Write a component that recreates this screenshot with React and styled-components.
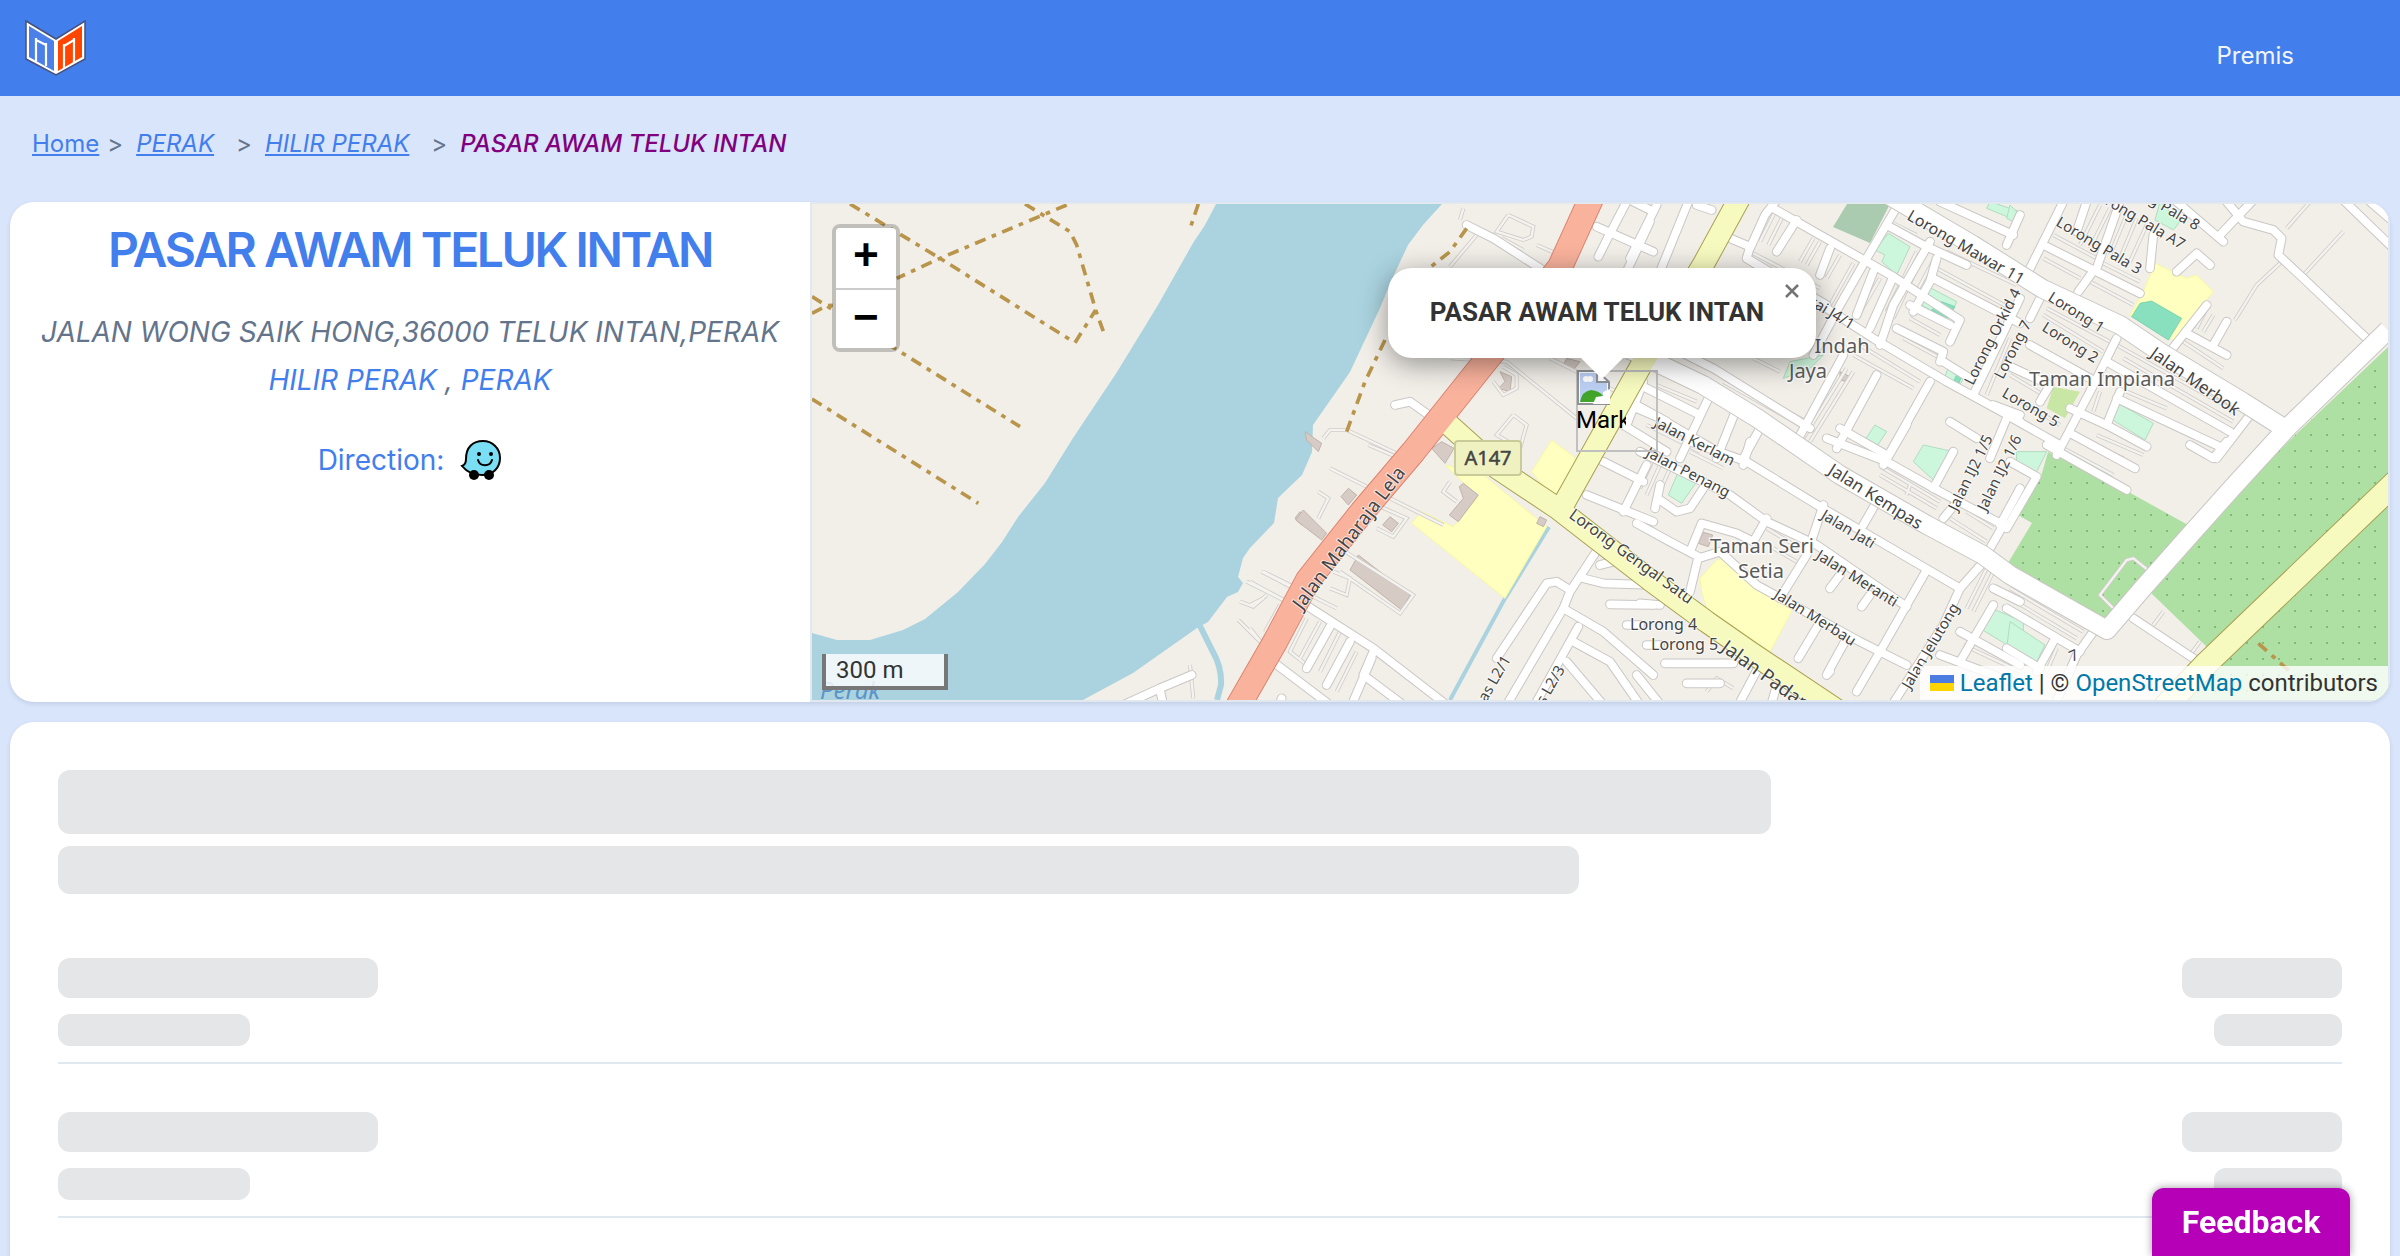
import styled, { createGlobalStyle } from "styled-components";

const GlobalStyle = createGlobalStyle`
  * {
    box-sizing: border-box;
  }
  body {
    margin: 0;
    background: #d9e5fb;
    font-family: Inter, sans-serif;
    font-size: 24px;
    line-height: 32px;
    color: #64748b;
  }
  a {
    color: #427eec;
  }
`;

const Page = styled.div`
  display: flex;
  flex-direction: column;
  height: 100vh;
  overflow: hidden;
`;

const Header = styled.header`
  display: flex;
  flex: none;
  align-items: center;
  justify-content: space-between;
  height: 96px;
  padding: 0 106px 0 24px;
  background: #427eec;
`;

const HomeLink = styled.a`
  display: flex;
`;

const NavLink = styled.a`
  padding-top: 16px;
  color: #f1f5f9;
  text-decoration: none;
`;

const Breadcrumb = styled.nav`
  display: flex;
  flex: none;
  gap: 8px;
  height: 106px;
  padding: 32px;
  line-height: 32px;
`;

const Crumb = styled.a`
  font-style: ${(p) => (p.$italic ? "italic" : "normal")};
  margin-left: ${(p) => (p.$italic ? "5px" : "0")};
  margin-right: ${(p) => (p.$italic ? "14px" : "0")};
`;

const Current = styled.span`
  margin-left: 5px;
  color: #800080;
  font-style: italic;
  font-weight: 500;
`;

const Main = styled.main`
  display: flex;
  flex: 1;
  flex-direction: column;
  gap: 20px;
  min-height: 0;
  padding: 0 10px;
`;

const Premise = styled.section`
  display: grid;
  flex: none;
  grid-template-columns: minmax(0, 40fr) minmax(0, 79fr);
  height: 500px;
  border-radius: 24px;
  overflow: hidden;
  background: #fff;
  box-shadow: 0 2px 4px rgba(100, 116, 139, 0.2);
`;

const Info = styled.div`
  display: flex;
  flex-direction: column;
  align-items: center;
  padding-top: 20px;
  font-size: 28px;
  text-align: center;
`;

const Title = styled.h1`
  margin: 0 0 30px;
  color: #427eec;
  font-size: 48px;
  font-weight: 600;
  line-height: 56px;
  letter-spacing: -0.05em;
`;

const Address = styled.address`
  line-height: 48px;

  a {
    text-decoration: none;
  }
`;

const Direction = styled.a`
  display: flex;
  align-items: center;
  gap: 16px;
  margin-top: 32px;
  line-height: 48px;
  text-decoration: none;
`;

const MapFrame = styled.div`
  position: relative;
  border: 2px solid #e2e8f0;
  overflow: hidden;
  background: #f2efe9;
  color: #333;
  font-family: Roboto, sans-serif;
`;

const MapSvg = styled.svg`
  display: block;
  width: 100%;
  height: 100%;
  font-family: "Noto Sans", sans-serif;
`;

const ZoomBox = styled.div`
  position: absolute;
  top: 20px;
  left: 20px;
  border: 4px solid rgba(0, 0, 0, 0.2);
  border-radius: 8px;
  background-clip: padding-box;
  overflow: hidden;
`;

const ZoomButton = styled.button`
  display: block;
  width: 60px;
  height: 60px;
  padding: 0;
  border: 0;
  background: #fff;
  color: #000;
  font: bold 44px/60px "Liberation Mono", monospace;

  & + & {
    border-top: 2px solid #ccc;
  }
`;

const ScaleLine = styled.div`
  position: absolute;
  bottom: 10px;
  left: 10px;
  width: 126px;
  height: 36px;
  padding-left: 10px;
  border: 4px solid #777;
  border-top: 0;
  background: rgba(255, 255, 255, 0.8);
`;

const Attribution = styled.div`
  position: absolute;
  right: 0;
  bottom: 0;
  display: flex;
  align-items: center;
  gap: 6px;
  height: 34px;
  padding: 0 10px;
  background: rgba(255, 255, 255, 0.8);

  a {
    color: #0078a8;
    text-decoration: none;
  }
`;

const Popup = styled.div`
  position: absolute;
  top: 64px;
  left: 50%;
  width: 428px;
  height: 90px;
  margin-left: -212px;
  padding-right: 10px;
  border-radius: 24px;
  background: #fff;
  box-shadow: 0 6px 28px rgba(0, 0, 0, 0.4);
  font-size: 26px;
  font-weight: bold;
  line-height: 88px;
  text-align: center;

  &::after {
    content: "";
    position: absolute;
    top: 100%;
    left: 50%;
    margin-left: -21px;
    border: 21px solid transparent;
    border-top-color: #fff;
    border-bottom: 0;
  }
`;

const CloseButton = styled.button`
  position: absolute;
  top: 0;
  right: 0;
  width: 48px;
  height: 48px;
  padding: 0;
  border: 0;
  background: none;
  color: #757575;
`;

const Marker = styled.div`
  position: absolute;
  top: 166px;
  left: 50%;
  width: 82px;
  height: 82px;
  margin-left: -24px;
  box-shadow: inset 0 0 0 2px silver;
  color: #000;

  svg {
    display: block;
  }
`;

const MarkerAlt = styled.div`
  width: 50px;
  overflow: hidden;
  line-height: 30px;
`;

const Prices = styled.section`
  flex: 1;
  min-height: 0;
  padding: 48px 48px 0;
  border-radius: 24px 24px 0 0;
  background: #fff;
  box-shadow: 0 2px 4px rgba(100, 116, 139, 0.2);
`;

const Bone = styled.div`
  width: ${(p) => p.$width};
  height: ${(p) => p.$height}px;
  border-radius: 12px;
  background: #e5e6e8;
`;

const Heading = styled.div`
  display: grid;
  gap: 12px;
  margin-bottom: 16px;
`;

const Row = styled.div`
  display: flex;
  justify-content: space-between;
  padding: 48px 0 16px;
  border-bottom: 2px solid #e2e8f0;
`;

const Pair = styled.div`
  display: flex;
  flex-direction: column;
  align-items: ${(p) => (p.$end ? "flex-end" : "flex-start")};
  gap: 16px;
`;

const Feedback = styled.button`
  position: fixed;
  right: 50px;
  bottom: 0;
  width: 198px;
  height: 68px;
  border: 0;
  border-radius: 12px 12px 0 0;
  background: #b500b8;
  box-shadow: 0 0 8px rgba(0, 0, 0, 0.4);
  color: #fff;
  font: bold 32px/40px Roboto, sans-serif;
`;

// Map data, one entry per tile. Tile units are a third of a pixel.
const tiles = [
  {
    x: 800,
    y: 195,
    roads: ["970 1530 1080 1480 1175 1440", "1080 1485 1090 1530"],
    lanes: [
      "1385 1130 1500 1190",
      "1340 1160 1460 1220",
      "1320 1220 1360 1235 1400 1200",
      "1315 1275 1390 1350",
      "1440 1230 1400 1310",
      "1170 1410 1180 1510",
    ],
    buildings: ["1485 970 1500 950 1520 970 1505 990"],
    paths: [
      "150 27 420 190 815 437",
      "800 30 420 190 290 250",
      "36 355 80 332 108 330",
      "675 27 810 110 830 150 887 345 912 415",
      "825 443 887 345",
      "36 305 300 470 660 695",
      "36 612 535 925",
      "1195 27 1172 95",
    ],
  },
  {
    x: 1250,
    y: 195,
    roads: [
      "650 90 730 130 870 220",
      "1130 20 1075 125 1045 185",
      "1040 95 1210 170",
      "1200 80 1130 230",
      "435 630 480 620 550 670",
      "1150 625 1250 680",
      "1120 690 1250 770",
      "1180 560 1130 690",
    ],
    lanes: [
      "600 215 680 120",
      "775 60 850 95 845 125 820 135 740 110 775 60",
      "755 130 820 165",
      "860 150 940 185",
      "600 490 770 500 980 670",
      "730 560 760 600 800 580 800 540 760 515",
      "790 660 830 690 810 760 740 720 790 660",
      "220 730 240 705 290 705 450 780",
      "640 40 630 75",
      "900 490 1100 590",
    ],
    buildings: [
      "750 530 785 545 780 590 745 580 765 560",
      "165 710 215 745 205 770 170 735",
      "950 490 990 500 970 525 940 510",
    ],
    paths: ["650 100 600 170 530 225", "405 435 345 560 290 710"],
  },
  {
    x: 1250,
    y: 445,
    roads: [
      "175 485 370 610 590 780",
      "240 545 170 670",
      "300 590 230 720",
      "365 640 305 780",
      "75 655 240 780",
      "95 760 80 800",
      "370 620 340 690 460 780",
      "740 640 890 415 920 410 960 435",
      "1035 325 960 440 940 490 770 780",
      "940 490 1060 560 1210 690",
      "985 545 860 770",
      "1000 400 1060 415 1210 420",
      "1080 478 1210 480",
      "970 590 1080 650 1170 780",
      "950 650 1060 780",
      "1050 360 1110 345 1210 400",
      "1060 50 1180 110",
      "1190 60 1120 200",
      "1010 150 1210 230",
      "1130 540 1170 540",
    ],
    lanes: [
      "240 70 580 240",
      "205 140 235 160 205 220",
      "40 380 260 490",
      "0 410 110 470",
      "40 460 0 480",
      "90 480 45 560",
      "0 550 40 600",
      "380 180 470 220 430 275 380 250",
      "170 520 120 620 170 660",
      "210 530 150 640",
      "250 380 300 400 290 450 240 430",
      "270 310 490 450 450 505 270 380",
      "600 110 580 140 620 170",
      "355 0 450 40",
      "270 560 210 680",
      "320 620 260 740",
    ],
    buildings: [
      "325 330 480 450 455 495 300 375",
      "160 195 230 265 215 285 137 225",
      "295 130 320 150 295 180 273 155",
      "640 115 685 150 625 230 598 210 640 160 628 125",
      "420 215 445 235 425 260 398 240",
      "870 215 890 225 880 245 860 235",
      "545 10 575 -10 612 10 585 55",
    ],
    sand: [
      "485 235 515 200 610 245 685 155 585 60 700 90 890 245 765 460",
      "845 80 910 160 985 45 905 -15",
    ],
  },
  {
    x: 1640,
    y: 195,
    roads: [
      "145 20 60 230",
      "-20 20 40 50",
      "50 30 -30 190",
      "170 30 215 45",
      "410 15 375 60 330 160",
      "270 130 330 155 320 190 560 330",
      "400 40 540 120 760 245 960 375 930 440",
      "470 75 410 170",
      "780 20 680 190 600 330 520 480",
      "760 245 690 400",
      "740 90 850 150 980 210",
      "870 140 760 330 720 450",
      "880 250 1140 385",
      "890 190 870 260 820 350",
      "810 330 930 390",
      "770 400 910 470 900 500",
      "910 500 990 550",
      "1140 310 1000 600",
      "320 190 560 340 700 430 920 560 1140 680",
      "870 560 740 790",
      "610 480 470 740",
      "710 540 590 760",
      "600 700 740 780",
      "0 570 180 660",
      "210 600 120 790",
      "290 640 230 790",
      "360 700 310 790",
      "-10 640 60 670 250 780",
      "120 470 220 520 510 700",
      "930 680 1010 730",
      "1100 670 1050 790",
      "1060 630 1140 660",
      "900 20 1120 120",
      "1140 60 1100 150",
      "570 160 540 240",
      "700 230 650 360",
    ],
    lanes: [
      "405 50 360 140",
      "430 60 385 150",
      "540 140 500 210",
      "520 130 480 200",
      "600 180 560 250",
      "660 210 590 340",
      "640 205 570 330",
      "720 250 650 370",
      "850 180 760 370",
      "830 170 740 350",
      "900 160 830 290",
      "330 170 540 280",
      "340 200 450 260",
      "750 80 830 120",
      "920 170 1130 270",
      "890 220 1110 340",
      "810 370 900 420",
      "790 430 920 500",
      "660 450 840 560",
      "640 480 820 580",
      "240 540 500 680",
      "250 560 480 690",
      "640 530 510 740",
      "620 520 490 730",
      "50 570 170 620",
      "20 690 180 770",
      "340 490 420 530",
      "1080 420 1000 600",
      "1110 430 1040 600",
      "370 700 520 790",
    ],
    buildings: ["600 530 630 545 620 560 600 555"],
    parks: [
      "745 115 810 155 770 240 725 200 735 180 705 165",
      "865 275 950 320 925 375 835 325",
      "930 500 980 530 960 570 915 545",
      "705 690 740 710 710 755 675 735",
      "450 500 550 480 510 520 430 550",
      "1050 20 1140 50 1125 75 1040 40",
    ],
    pitches: ["905 320 945 335 920 370 875 345", "950 540 965 545 955 568 940 560"],
  },
  {
    x: 1640,
    y: 445,
    roads: [
      "330 -10 310 60",
      "150 -10 320 50 540 185 720 290 960 430",
      "0 20 270 150 380 230 530 300 800 485",
      "-10 235 90 290 175 335 150 440",
      "60 120 45 190",
      "60 165 110 200 150 190 190 130",
      "150 320 185 235 290 265 340 290 380 220",
      "175 340 240 320 350 420 660 590 800 660",
      "550 180 500 330 420 460",
      "860 375 720 620 650 740",
      "600 390 570 430",
      "690 450 665 485",
      "535 540 475 640",
      "620 580 565 680 560 690 570 680",
      "710 170 670 240",
      "1040 340 960 430 910 540 750 790",
      "800 -60 730 60",
      "560 -20 740 50 900 140 1090 240 1050 310",
      "940 20 880 130",
      "1140 130 1080 240",
      "960 160 910 220",
      "1060 430 1140 470",
      "960 560 1140 660",
      "1060 480 960 650",
      "900 630 1140 720",
      "0 475 60 480",
      "75 655 280 655",
      "140 715 240 715",
      "-10 690 70 790",
      "370 640 290 790",
      "420 690 390 790",
      "20 600 60 600",
    ],
    lanes: [
      "40 40 0 130",
      "60 60 20 150",
      "90 70 50 160",
      "730 70 900 170",
      "720 90 890 190",
      "810 120 800 150",
      "380 250 480 310",
      "400 310 470 350",
      "1040 370 980 490",
      "1060 380 1000 500",
      "1080 440 1140 470",
      "970 600 1140 680",
      "150 20 250 70",
      "980 200 1060 250",
      "930 220 1040 290",
      "200 740 230 700 280 730",
    ],
    buildings: ["190 262 218 270 205 305 175 295"],
    parks: [
      "850 0 940 20 885 110 820 50",
      "115 80 170 110 125 175 85 150",
      "1055 490 1150 530 1150 630 1020 550",
    ],
    sand: ["185 440 180 400 230 345 275 335 310 395 465 480 390 620 200 490"],
  },
  {
    x: 2010,
    y: 195,
    roads: [
      "160 20 50 240",
      "110 155 390 295",
      "245 235 205 290",
      "330 20 260 220",
      "230 20 200 110",
      "430 120 420 220",
      "500 20 640 140",
      "730 15 630 120",
      "590 330 480 470",
      "500 230 560 175 600 210",
      "650 380 610 450",
      "530 415 650 480",
      "90 310 60 370",
      "320 430 240 590 140 780",
      "60 450 240 550",
      "290 500 660 710",
      "720 660 620 790",
      "180 640 290 690 410 755",
      "330 590 290 690",
      "320 610 640 760",
      "-10 510 120 570 90 620",
      "-10 660 150 750",
      "650 20 700 80 790 105 815 130 805 180 880 250 1085 445",
      "1000 15 1150 160",
      "1080 20 1150 80",
    ],
    lanes: [
      "1000 110 880 240",
      "810 205 740 270 675 375",
      "900 20 830 100",
      "130 120 260 190",
      "100 190 210 250",
      "270 200 390 260",
      "240 260 370 330",
      "270 30 210 150",
      "300 40 240 160",
      "350 60 300 180",
      "380 70 330 190",
      "410 90 360 200",
      "320 450 660 640",
      "340 490 670 680",
      "350 590 470 640",
      "240 580 220 640",
      "270 590 250 650",
      "210 650 400 750",
      "180 720 340 790",
      "110 340 300 440",
      "100 360 280 470",
      "40 300 0 380",
      "0 540 100 600",
      "20 610 150 690",
      "590 340 560 400",
      "520 440 640 520",
      "610 360 580 410",
    ],
    sand: ["435 205 530 250 560 240 610 290 490 435 360 360 400 290"],
    parks: [
      "325 625 430 685 405 735 300 670",
      "450 20 510 80 490 105 435 75",
      "0 30 20 50 10 80 -10 70",
    ],
    grass: ["130 575 210 590 165 670 110 640"],
    pitches: ["365 365 390 325 425 318 515 370 475 435"],
  },
  {
    x: 2010,
    y: 445,
    roads: [
      "110 0 350 135",
      "190 -30 375 70",
      "540 0 610 40 650 -10",
      "0 50 80 95 -10 250",
      "370 520 580 660",
      "250 560 200 630 130 790",
      "-10 490 210 620",
      "130 590 80 680",
      "-10 610 90 670",
    ],
    lanes: [
      "320 500 270 450 350 345 370 340 420 380",
      "460 500 430 540",
      "570 590 540 630",
      "0 430 220 560",
      "0 460 200 580",
      "160 10 310 90",
      "260 -30 400 30",
      "140 610 110 680",
    ],
    parks: ["0 530 105 600 80 650 -10 610", "20 20 110 20 80 80 20 60"],
    paths: ["745 595 840 680"],
  },
];

const labels = [
  ["Jalan Maharaja Lela", 1302, 611, -53, 19],
  ["Lorong Mawar 11", 1906, 219, 30, 16],
  ["Lorong Orkid 4", 1973, 386, -63, 15],
  ["Lorong 7", 2003, 380, -63, 15],
  ["Lorong 1", 2047, 300, 32, 15],
  ["Lorong 2", 2041, 330, 32, 15],
  ["Lorong 5", 2001, 396, 30, 15],
  ["Lorong Pala 3", 2055, 225, 31, 15],
  ["Lorong Pala A7", 2090, 195, 31, 15],
  ["Lorong Pala 8", 2113, 181, 31, 15],
  ["Jalan Merbok", 2149, 356, 35, 17],
  ["Sungkai J4/1", 1776, 285, 31, 15],
  ["Jalan Kerlam", 1653, 426, 27, 15],
  ["Jalan Penang", 1645, 456, 27, 15],
  ["Jalan Kempas", 1827, 473, 32, 17],
  ["Jalan Jati", 1820, 518, 31, 15],
  ["Jalan Meranti", 1815, 558, 32, 15],
  ["Jalan Merbau", 1773, 597, 32, 15],
  ["Lorong Gengal Satu", 1568, 517, 36, 16],
  ["Jalan Padang", 1720, 650, 36, 19],
  ["Lorong 4", 1630, 630, 0, 16],
  ["Lorong 5", 1651, 650, 0, 16],
  ["Jalan Jelutong", 1910, 690, -59, 15],
  ["Jalan IJ2 1/5", 1957, 512, -64, 15],
  ["Jalan IJ2 1/6", 1986, 512, -64, 15],
  ["Emas L2/1", 1475, 722, -60, 15],
  ["Emas L2/3", 1529, 732, -60, 15],
  ["7", 2072, 662, -25, 15],
];

const places = [
  ["Taman Impiana", 2102, 386],
  ["Indah", 1842, 353],
  ["Jaya", 1808, 378],
  ["Taman Seri", 1762, 553],
  ["Setia", 1761, 578],
];

const mainRoads = [
  {
    color: "#fff",
    edge: "#c9c7c4",
    width: 18,
    points: "1630 350 1703 385 1757 418 1840 475 1927 525 1983 555 2010 575 2107 630 2143 588 2190 535 2233 487 2287 428 2388 330",
  },
  {
    color: "#fff",
    edge: "#c9c7c4",
    width: 18,
    points: "1880 190 1973 245 2043 289 2120 325 2160 352 2243 402 2287 430",
  },
  {
    color: "#f7fabf",
    edge: "#a9a152",
    width: 21,
    points: "1447 423 1497 468 1557 508 1593 536 1650 580 1707 622 1750 652 1840 712",
  },
  {
    color: "#f7fabf",
    edge: "#a9a152",
    width: 21,
    points: "1744 190 1703 265 1643 362 1562 507",
  },
  {
    color: "#f7fabf",
    edge: "#a9a152",
    width: 23,
    points: "2400 478 2207 663 2160 712",
  },
  {
    color: "#f9b29c",
    edge: "#dc8371",
    width: 24,
    points: "1595 190 1560 267 1488 358 1413 452 1362 512 1308 580 1275 642 1236 710",
  },
];

const Layer = ({ kind, shape: Shape = "polygon", ...rest }) =>
  tiles.map((tile) => (
    <g
      key={`${tile.x}-${tile.y}`}
      transform={`translate(${tile.x} ${tile.y}) scale(0.33333)`}
      {...rest}
    >
      {(tile[kind] || []).map((points) => (
        <Shape key={points} points={points} />
      ))}
    </g>
  ));

const StreetMap = () => (
  <MapSvg
    viewBox="812 204 1576 496"
    preserveAspectRatio="xMidYMid slice"
    role="img"
    aria-label="Map of Teluk Intan"
  >
    <defs>
      <pattern id="orchard" width="16" height="16" patternUnits="userSpaceOnUse" x="2047" y="459">
        <circle cx="8" cy="8" r="1" fill="#6fae6a" />
      </pattern>
    </defs>
    <path
      fill="#aad3df"
      d="M1216 204L1205 225L1193 243L1158 305L1117 372L1073 438L1045 483L1018 517L1002 542L985 564L958 592L925 619L903 630L870 640H837L812 633V700H1083L1133 673L1197 628L1208 622L1227 597L1238 592L1243 583L1238 577L1243 558L1250 548L1274 523L1278 498L1302 475L1312 452L1313 425L1350 372L1380 308L1393 277L1408 245L1423 225L1442 204Z"
    />
    <g fill="none" stroke="#aad3df">
      <path strokeWidth="6" d="M1200 626L1213 652Q1222 668 1221 685L1217 700" />
      <path strokeWidth="4" d="M1549 527L1503 602L1450 700" />
    </g>
    <polygon fill="#aacbaf" points="1847 204 1833 227 1870 243 1890 204" />
    {["#aedfa3", "url(#orchard)"].map((fill) => (
      <g key={fill} fill={fill}>
        <polygon points="2048 452 2125 490 2188 525 2110 625 2005 568 2032 523 2018 515 2040 480" />
        <polygon points="2388 347 2290 440 2240 490 2150 592 2208 648 2160 700 2388 700" />
      </g>
    ))}
    <Layer kind="sand" fill="#ffffc0" stroke="#f7f7a0" strokeWidth="3" />
    <Layer kind="parks" fill="#cdf7dc" stroke="#afdcc0" strokeWidth="3" />
    <Layer kind="grass" fill="#c8e6a4" />
    <Layer kind="pitches" fill="#88e0be" stroke="#62c9a2" strokeWidth="2" />
    <Layer kind="buildings" fill="#d6cbc5" stroke="#c0b3ab" strokeWidth="3" />
    <Layer kind="lanes" shape="polyline" fill="none" stroke="#cfccc9" strokeWidth="12" />
    <Layer kind="lanes" shape="polyline" fill="none" stroke="#f5f3ef" strokeWidth="7" />
    <Layer
      kind="roads"
      shape="polyline"
      fill="none"
      stroke="#cac7c5"
      strokeWidth="29"
      strokeLinecap="round"
      strokeLinejoin="round"
    />
    <Layer
      kind="roads"
      shape="polyline"
      fill="none"
      stroke="#fff"
      strokeWidth="23"
      strokeLinecap="round"
      strokeLinejoin="round"
    />
    <g fill="none" strokeLinejoin="round">
      {mainRoads.map((r) => (
        <polyline key={r.points} points={r.points} stroke={r.edge} strokeWidth={r.width + 2} />
      ))}
      {mainRoads.map((r) => (
        <polyline key={r.points} points={r.points} stroke={r.color} strokeWidth={r.width} />
      ))}
    </g>
    <Layer
      kind="paths"
      shape="polyline"
      fill="none"
      stroke="#b9954c"
      strokeWidth="11"
      strokeDasharray="34 20 14 20"
    />
    <rect x="1455" y="441" width="66" height="34" rx="3" fill="#eff2c0" stroke="#c9cb98" strokeWidth="2" />
    <text x="1488" y="465" fontSize="20" fill="#444" stroke="#444" strokeWidth="0.5" textAnchor="middle">
      A147
    </text>
    <g fill="#444" stroke="#fff" strokeOpacity="0.7" strokeWidth="2" paintOrder="stroke">
      {labels.map(([text, x, y, angle, size]) => (
        <text key={text + x} transform={`translate(${x} ${y}) rotate(${angle})`} fontSize={size}>
          {text}
        </text>
      ))}
    </g>
    <g fill="#5a5a5a" stroke="#fff" strokeOpacity="0.7" strokeWidth="3" paintOrder="stroke" textAnchor="middle">
      {places.map(([text, x, y]) => (
        <text key={text} x={x} y={y} fontSize="20">
          {text}
        </text>
      ))}
    </g>
    <text x="820" y="699" fontSize="24" fontStyle="italic" fill="#5b93c9">
      Perak
    </text>
  </MapSvg>
);

const Logo = () => (
  <svg width="64" height="64" viewBox="0 0 64 64" role="img" aria-label="Home">
    <path d="M2 5L32 23L61 5V43L32 59L2 43Z" fill="#fff" stroke="#46527c" strokeWidth="1.5" />
    <path d="M5 10L30 25V55L5 41Z" fill="#4a80e8" />
    <path d="M58 10L34 25V55L58 41Z" fill="#ff4500" />
    <path
      fill="none"
      stroke="#fff"
      strokeWidth="2.2"
      d="M12 45V22M12 24L22 29M22 27V50M40 53V28M50 47V22M40 30L50 24"
    />
  </svg>
);

const Waze = () => (
  <svg width="42" height="42" viewBox="0 0 42 42" aria-hidden="true">
    <path
      d="M23 2C32 2 40 9 40 19C40 29 33 36 22 36C12 36 6 32 2 27C5 26 6 24 6 20C6 8 13 2 23 2Z"
      fill="#7adff5"
      stroke="#000"
      strokeWidth="2"
    />
    <circle cx="14" cy="36" r="5" />
    <circle cx="29" cy="36" r="5" />
    <circle cx="19" cy="15" r="2" />
    <circle cx="31" cy="15" r="2" />
    <path d="M18 21C20 28 30 28 32 21" fill="none" stroke="#000" strokeWidth="2" strokeLinecap="round" />
  </svg>
);

const BrokenImage = () => (
  <svg width="34" height="35" viewBox="0 0 34 35" aria-hidden="true">
    <path d="M2 1H21L33 12V34H2Z" fill="#fff" stroke="#8e9297" strokeWidth="2" />
    <path d="M4 3H20V13H31V22L20 32H4Z" fill="#bcd0f4" />
    <circle cx="10" cy="9" r="3" fill="#fff" />
    <circle cx="14" cy="9" r="3" fill="#fff" />
    <path d="M4 32Q6 21 15 20Q24 21 27 26L20 32Z" fill="#41a52a" />
    <path d="M34 19L27 22V26L20 27L17 34H34Z" fill="#fff" />
    <path d="M21 2V12H32" fill="none" stroke="#8e9297" strokeWidth="2" />
  </svg>
);

const App = () => (
  <Page>
    <GlobalStyle />
    <Header>
      <HomeLink href="#home">
        <Logo />
      </HomeLink>
      <NavLink href="#premis">Premis</NavLink>
    </Header>
    <Breadcrumb aria-label="Breadcrumb">
      <Crumb href="#home">Home</Crumb>
      <span>&gt;</span>
      <Crumb href="#perak" $italic>
        PERAK
      </Crumb>
      <span>&gt;</span>
      <Crumb href="#hilir-perak" $italic>
        HILIR PERAK
      </Crumb>
      <span>&gt;</span>
      <Current>PASAR AWAM TELUK INTAN</Current>
    </Breadcrumb>
    <Main>
      <Premise>
        <Info>
          <Title>PASAR AWAM TELUK INTAN</Title>
          <Address>
            JALAN WONG SAIK HONG,36000 TELUK INTAN,PERAK
            <br />
            <a href="#hilir-perak">HILIR PERAK</a> , <a href="#perak">PERAK</a>
          </Address>
          <Direction href="#waze">
            Direction: <Waze />
          </Direction>
        </Info>
        <MapFrame>
          <StreetMap />
          <Marker>
            <BrokenImage />
            <MarkerAlt>Marker</MarkerAlt>
          </Marker>
          <Popup>
            PASAR AWAM TELUK INTAN
            <CloseButton aria-label="Close popup">
              <svg width="14" height="14" viewBox="0 0 14 14">
                <path d="M1 1L13 13M13 1L1 13" stroke="currentColor" strokeWidth="2.5" />
              </svg>
            </CloseButton>
          </Popup>
          <ZoomBox>
            <ZoomButton aria-label="Zoom in">+</ZoomButton>
            <ZoomButton aria-label="Zoom out">−</ZoomButton>
          </ZoomBox>
          <ScaleLine>300 m</ScaleLine>
          <Attribution>
            <svg width="24" height="16" viewBox="0 0 24 16" aria-hidden="true">
              <path fill="#4c7be1" d="M0 0h24v8H0z" />
              <path fill="#ffd500" d="M0 8h24v8H0z" />
            </svg>
            <a href="#leaflet">Leaflet</a>
            <span>|</span>
            <span>
              © <a href="#osm">OpenStreetMap</a> contributors
            </span>
          </Attribution>
        </MapFrame>
      </Premise>
      <Prices aria-busy="true">
        <Heading>
          <Bone $width="75%" $height={64} />
          <Bone $width="66.6%" $height={48} />
        </Heading>
        {[1, 2, 3].map((n) => (
          <Row key={n}>
            <Pair>
              <Bone $width="320px" $height={40} />
              <Bone $width="192px" $height={32} />
            </Pair>
            <Pair $end>
              <Bone $width="160px" $height={40} />
              <Bone $width="128px" $height={32} />
            </Pair>
          </Row>
        ))}
      </Prices>
    </Main>
    <Feedback>Feedback</Feedback>
  </Page>
);

export default App;
